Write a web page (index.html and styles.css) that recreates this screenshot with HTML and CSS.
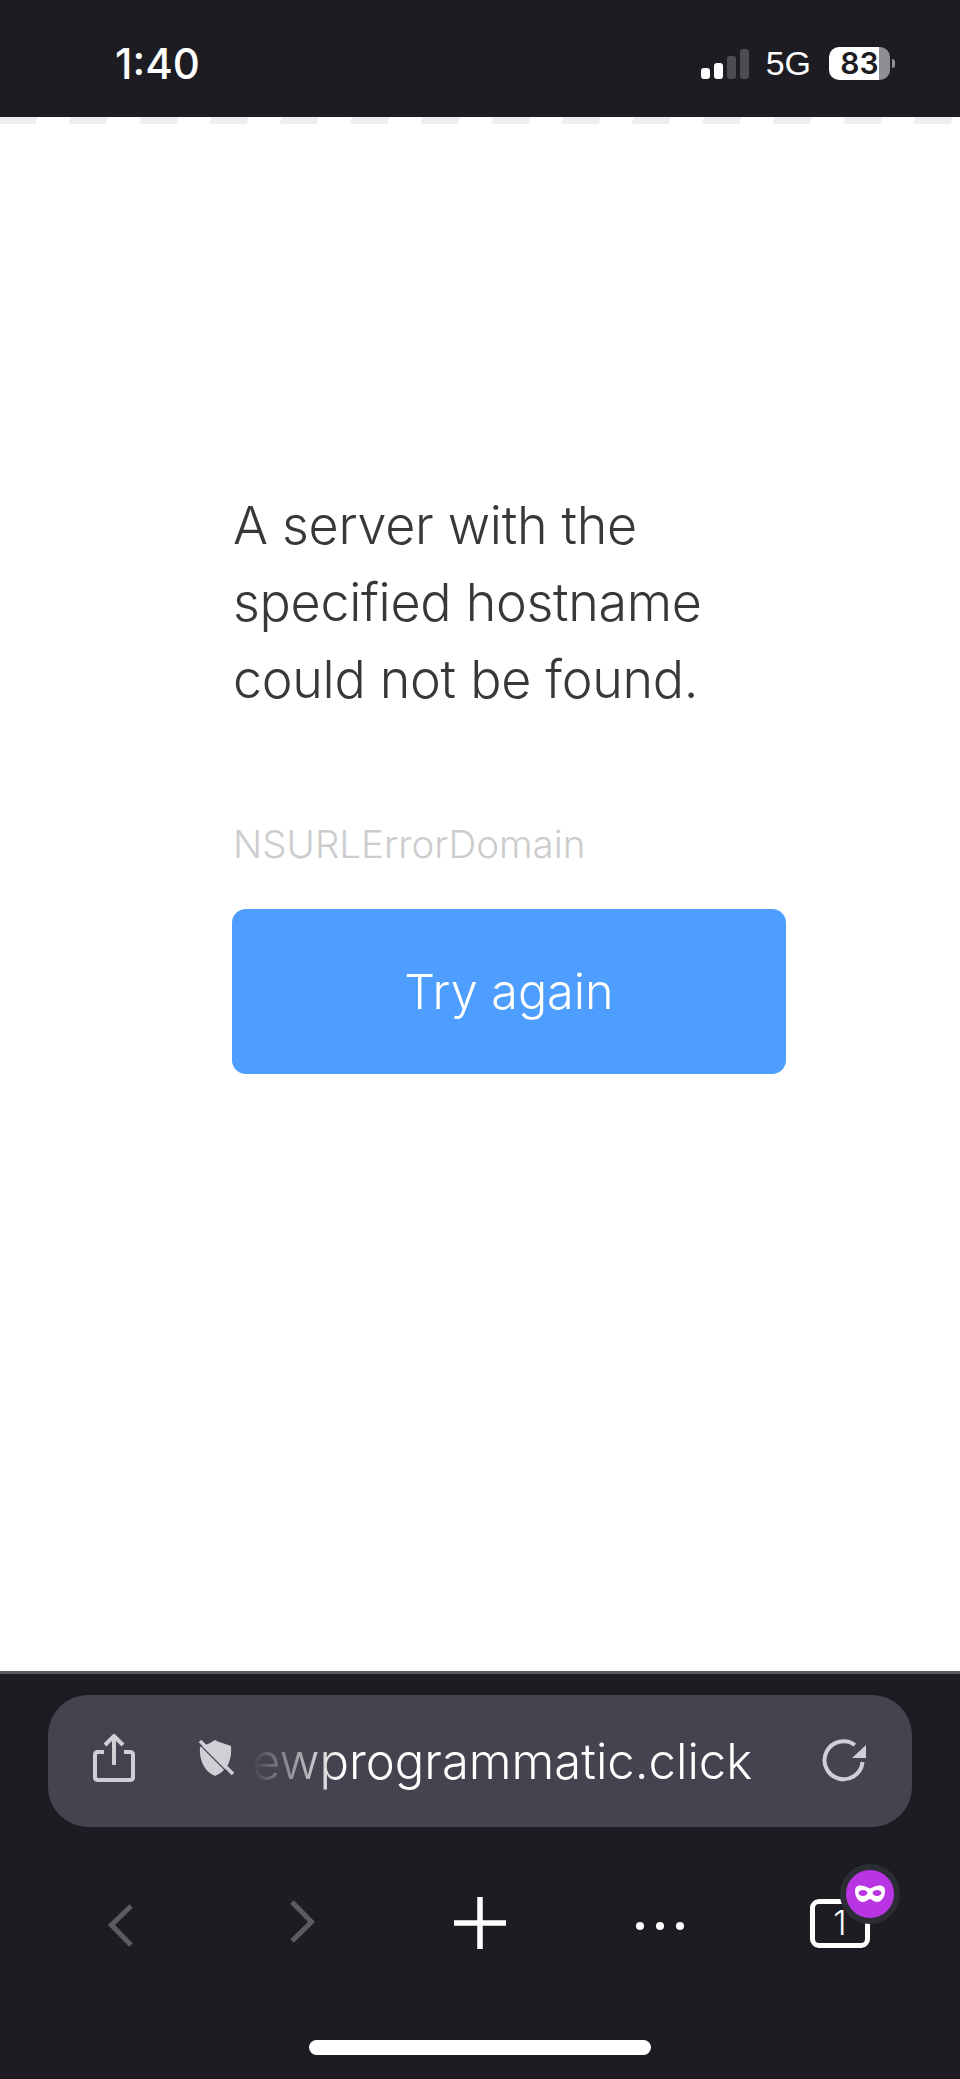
FILE: index.html
```html
<!DOCTYPE html>
<html lang="en">
<head>
  <meta charset="UTF-8">
  <meta name="viewport" content="width=device-width, initial-scale=1.0">
  <title>Server not found</title>
  <link rel="stylesheet" href="styles.css">
</head>
<body>

  <header class="status-bar">
    <span class="time">1:40</span>
    <div class="status-right">
      <div class="signal">
        <span class="bar bar-1"></span>
        <span class="bar bar-2"></span>
        <span class="bar bar-3"></span>
        <span class="bar bar-4"></span>
      </div>
      <span class="network">5G</span>
      <div class="battery">83</div>
    </div>
  </header>
  <div class="dashes"></div>

  <main class="page">
    <div class="error">
      <p class="error-message">A server with the specified hostname could not be found.</p>
      <p class="error-domain">NSURLErrorDomain</p>
      <button class="retry" type="button">Try again</button>
    </div>
  </main>

  <footer class="browser-bar">
    <div class="url-pill">
      <svg class="icon-share" width="42" height="48" viewBox="0 0 42 48" fill="none" stroke="#cfcfd6" stroke-width="4">
        <path d="M11 18H5Q2 18 2 21V43Q2 46 5 46H37Q40 46 40 43V21Q40 18 37 18H31"/>
        <path d="M21 3V31"/>
        <path d="M12 11L21 2L30 11"/>
      </svg>
      <svg class="icon-shield" width="36" height="36" viewBox="0 0 36 36">
        <path d="M17 0C20 2 28 4 33 6C34 18 31 30 17 36C5 31 1 18 2 7C7 5 13 3 17 0Z" fill="#cfcfd6"/>
        <path d="M0 3L33 36" stroke="#45434f" stroke-width="1.2"/>
        <path d="M2 1L35 34" stroke="#cfcfd6" stroke-width="3.5"/>
      </svg>
      <span class="url-text">ewprogrammatic.click</span>
      <svg class="icon-reload" width="46" height="46" viewBox="0 0 46 46" fill="none">
        <path d="M41.5 24A19 19 0 1 1 34 7" stroke="#cfcfd6" stroke-width="4"/>
        <path d="M45 7V20H31Z" fill="#cfcfd6"/>
      </svg>
    </div>

    <nav class="toolbar">
      <div class="tool">
        <svg width="60" height="60" viewBox="0 0 60 60" fill="none" stroke="#5c5c60" stroke-width="5">
          <path d="M41 13L21.5 32L41 52"/>
        </svg>
      </div>
      <div class="tool">
        <svg width="60" height="60" viewBox="0 0 60 60" fill="none" stroke="#5c5c60" stroke-width="5">
          <path d="M22 9L41.5 29L22 48"/>
        </svg>
      </div>
      <div class="tool">
        <svg width="60" height="60" viewBox="0 0 60 60" fill="none" stroke="#fff" stroke-width="5.5">
          <path d="M4 30H56M30 4V56"/>
        </svg>
      </div>
      <div class="tool">
        <svg width="60" height="60" viewBox="0 0 60 60" fill="#fff">
          <circle cx="10" cy="33" r="4"/>
          <circle cx="30" cy="33" r="4"/>
          <circle cx="50" cy="33" r="4"/>
        </svg>
      </div>
      <div class="tool">
        <div class="tab-count">
          1
          <div class="private-badge">
            <svg width="30" height="17" viewBox="0 0 30 17">
              <path fill="#fff" fill-rule="evenodd" d="M6 .5C10 .5 12.500 3 15 3.500C17.500 3 20 .5 24 .5C28 .5 30 2 30 6C30 12 26.500 17 22 17C18.500 17 17 14 15 14C13 14 11.500 17 8 17C3.500 17 0 12 0 6C0 2 2 .5 6 .5ZM8 5C5.500 5 3.500 6.500 3.500 8C3.500 9.500 5.500 11 8 11C10.500 11 12.500 9.500 12.500 8C12.500 6.500 10.500 5 8 5ZM22 5C19.500 5 17.500 6.500 17.500 8C17.500 9.500 19.500 11 22 11C24.500 11 26.500 9.500 26.500 8C26.500 6.500 24.500 5 22 5Z"/>
            </svg>
          </div>
        </div>
      </div>
    </nav>

    <div class="home-indicator"></div>
  </footer>

</body>
</html>
```

FILE: styles.css
```css
body {
  font-family: Inter, "Liberation Sans", sans-serif;
  background-color: #fff;
  margin: 0;
  padding: 0;
  height: 2079px;
  display: flex;
  flex-direction: column;
  overflow: hidden;
}
.status-bar {
  box-sizing: border-box;
  height: 117px;
  padding: 10px 70px 0 115px;
  background-color: #1c1c22;
  color: #fff;
  display: flex;
  justify-content: space-between;
  align-items: center;
}
.time {
  font-size: 42px;
  font-weight: 500;
}
.status-right {
  display: flex;
  align-items: center;
}
.signal {
  display: flex;
  align-items: flex-end;
  gap: 4px;
  height: 30px;
}
.bar {
  width: 9px;
  border-radius: 3px;
  background-color: #fff;
}
.bar-1 { height: 11px; }
.bar-2 { height: 16px; }
.bar-3 { height: 23px; background-color: #4c4c52; }
.bar-4 { height: 30px; background-color: #4c4c52; }
.network {
  margin-left: 17px;
  font-family: "Liberation Sans", sans-serif;
  font-size: 34px;
}
.battery {
  position: relative;
  width: 61px;
  height: 33px;
  margin-left: 18px;
  border-radius: 10px;
  background: linear-gradient(90deg, #fff 50px, #8e8e93 50px);
  color: #1c1c22;
  font-size: 30px;
  font-weight: 600;
  line-height: 33px;
  text-align: center;
}
.battery::after {
  content: "";
  position: absolute;
  left: 63px;
  top: 12px;
  width: 3px;
  height: 9px;
  border-radius: 0 5px 5px 0;
  background-color: #8e8e93;
}
.dashes {
  height: 7px;
  background: repeating-linear-gradient(105deg, #eee 0, #eee 36px, #fff 36px, #fff 68px);
}
.page {
  flex: 1;
  padding: 363px 0 0 232px;
}
.error {
  width: 554px;
}
.error-message {
  margin: 0;
  padding-left: 1px;
  color: #383838;
  font-size: 52px;
  font-weight: 300;
  line-height: 77px;
  letter-spacing: -0.3px;
}
.error-domain {
  margin: 103px 0 0;
  padding-left: 1px;
  color: #ccc;
  font-size: 38.500px;
  font-weight: 300;
  line-height: 46px;
}
.retry {
  display: block;
  width: 554px;
  height: 165px;
  margin-top: 42px;
  padding: 0;
  border: none;
  border-radius: 14px;
  background-color: #4d9eff;
  color: #fff;
  font-family: inherit;
  font-size: 48.500px;
  font-weight: 300;
}
.browser-bar {
  box-sizing: border-box;
  height: 408px;
  padding-top: 21px;
  border-top: 3px solid #5a5a64;
  background-color: #1c1c22;
}
.url-pill {
  position: relative;
  box-sizing: border-box;
  height: 132px;
  margin: 0 48px;
  padding: 0 45px;
  border-radius: 40px;
  background-color: #45434f;
  display: flex;
  align-items: center;
}
.icon-share {
  margin-top: -6px;
}
.icon-shield {
  margin-left: 63px;
  margin-top: -6px;
}
.url-text {
  flex: 1;
  margin-left: 18px;
  color: #fff;
  font-size: 49px;
  font-weight: 300;
  -webkit-mask-image: linear-gradient(90deg, transparent 0, #fff 90px);
  mask-image: linear-gradient(90deg, transparent 0, #fff 90px);
}
.toolbar {
  display: flex;
  padding: 66px 30px 0;
}
.tool {
  width: 180px;
  height: 60px;
  display: flex;
  justify-content: center;
  align-items: center;
}
.tab-count {
  position: relative;
  box-sizing: border-box;
  width: 60px;
  height: 49px;
  border: 5px solid #fff;
  border-radius: 9px;
  color: #fff;
  font-size: 34px;
  font-weight: 300;
  line-height: 37px;
  text-align: center;
}
.private-badge {
  position: absolute;
  left: 25px;
  top: -40px;
  box-sizing: border-box;
  width: 60px;
  height: 60px;
  border: 6px solid #2c2c34;
  border-radius: 50%;
  background-color: #b935e3;
  display: flex;
  justify-content: center;
  align-items: center;
}
.home-indicator {
  width: 342px;
  height: 15px;
  margin: 87px auto 0;
  border-radius: 8px;
  background-color: #fff;
}
```
